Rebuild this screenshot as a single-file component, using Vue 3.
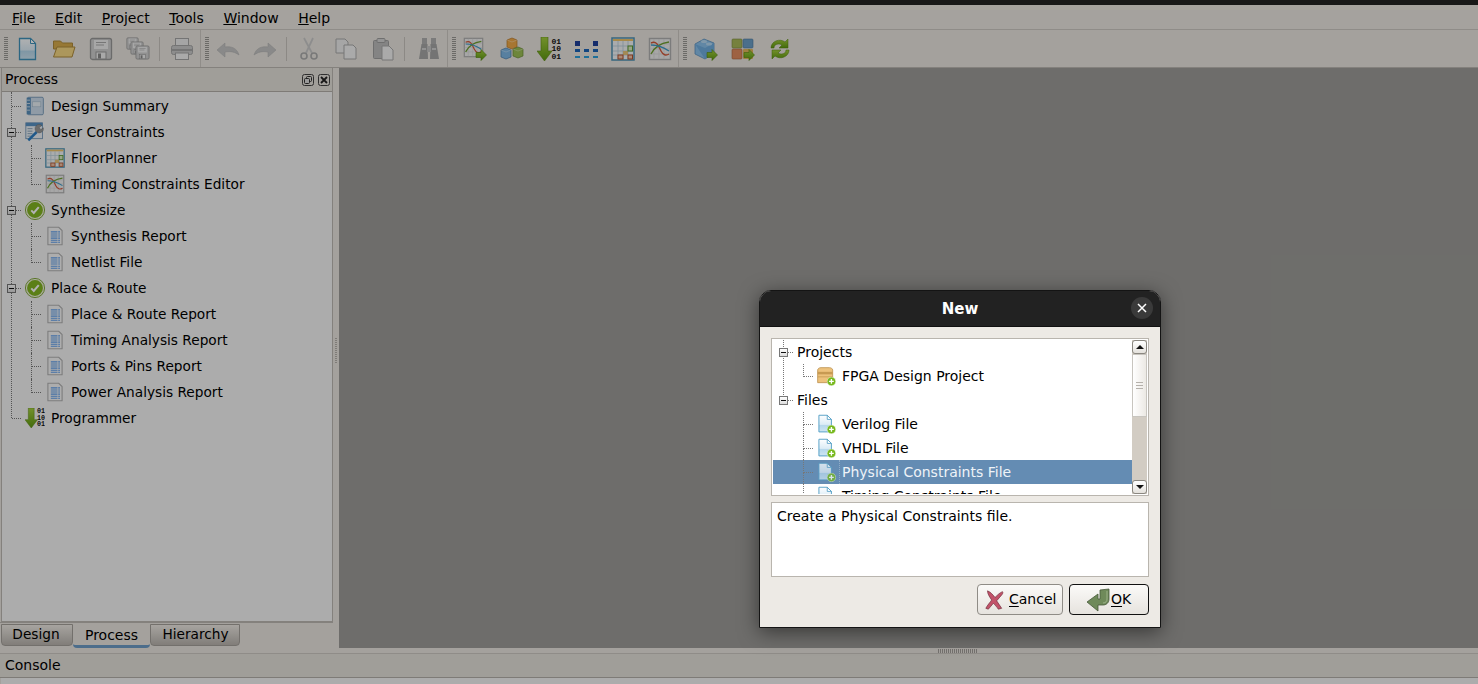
<template>
  <svg class="defs" width="0" height="0">
    <defs>
      <linearGradient id="gDoc" x1="0" y1="0" x2="0" y2="1">
        <stop offset="0" stop-color="#fdfeff" />
        <stop offset="0.55" stop-color="#dcecf6" />
        <stop offset="0.6" stop-color="#b6d8ec" />
        <stop offset="1" stop-color="#cfe6f3" />
      </linearGradient>
      <linearGradient id="gGreen" x1="0" y1="0" x2="0" y2="1">
        <stop offset="0" stop-color="#a6d040" />
        <stop offset="1" stop-color="#5f9a10" />
      </linearGradient>
      <symbol id="s-new" viewBox="0 0 24 24">
        <path d="M4.500 1.500h11l5 5v16h-16z" fill="url(#gDoc)" stroke="#3f93bb" stroke-width="1.300" />
        <path d="M15.500 1.500v5h5z" fill="#fff" stroke="#3f93bb" />
      </symbol>
      <symbol id="s-open" viewBox="0 0 24 24">
        <path d="M1.500 4h7l2 2h10v6h-19z" fill="#d8ad4c" stroke="#b08c3c" />
        <path d="M5 10h18l-3 10H1.500z" fill="#f6d884" stroke="#b08c3c" />
      </symbol>
      <symbol id="s-save" viewBox="0 0 24 24">
        <rect x="1.500" y="1.500" width="21" height="21" rx="2" fill="#d0d0d0" stroke="#9a9a9a" stroke-width="1.300" />
        <rect x="5" y="3" width="14" height="9" fill="#f0f0f0" />
        <path d="M7 5.500h10M7 8h8" stroke="#aaa" />
        <rect x="7" y="15" width="10" height="7" fill="#f2f2f2" stroke="#9a9a9a" />
        <rect x="9" y="16.500" width="3" height="5" fill="#8a8a8a" />
      </symbol>
      <symbol id="s-saveall" viewBox="0 0 24 24">
        <use href="#s-save" x="0" y="0" width="13" height="13" />
        <use href="#s-save" x="4" y="4" width="14" height="14" />
        <use href="#s-save" x="9" y="8" width="15" height="15" />
      </symbol>
      <symbol id="s-print" viewBox="0 0 24 24">
        <rect x="5.500" y="1.500" width="13" height="8" fill="#ececec" stroke="#a6a6a6" />
        <rect x="1.500" y="8.500" width="21" height="9" rx="2" fill="#cbcbcb" stroke="#a6a6a6" />
        <rect x="2" y="12" width="20" height="2" fill="#a8a8a8" />
        <rect x="5.500" y="16" width="13" height="6.500" fill="#f4f4f4" stroke="#a6a6a6" />
      </symbol>
      <symbol id="s-undo" viewBox="0 0 24 24">
        <path d="M1 13l8-7v4c6-1 12 1 14 8-4-3-8-4-14-3v5z" fill="#c4c4c4" stroke="#b5b5b5" stroke-width=".6" />
      </symbol>
      <symbol id="s-redo" viewBox="0 0 24 24">
        <path d="M23 13l-8-7v4C9 9 3 11 1 18c4-3 8-4 14-3v5z" fill="#c4c4c4" stroke="#b5b5b5" stroke-width=".6" />
      </symbol>
      <symbol id="s-cut" viewBox="0 0 24 24">
        <path d="M7 1l8 15M16 1L9 16" stroke="#cbcbcb" stroke-width="1.800" fill="none" />
        <circle cx="7" cy="19" r="3" fill="none" stroke="#adadad" stroke-width="1.600" />
        <circle cx="17" cy="19" r="3" fill="none" stroke="#adadad" stroke-width="1.600" />
      </symbol>
      <symbol id="s-copy" viewBox="0 0 24 24">
        <path d="M2 2h9l3 3v11H2z" fill="#eee" stroke="#aaa" />
        <path d="M10 8h9l3 3v11H10z" fill="#f4f4f4" stroke="#aaa" />
      </symbol>
      <symbol id="s-paste" viewBox="0 0 24 24">
        <rect x="2.500" y="3.500" width="15" height="18" rx="1" fill="#bdbdbd" stroke="#a0a0a0" />
        <rect x="6" y="1.500" width="8" height="4" rx="1" fill="#d4d4d4" stroke="#a0a0a0" />
        <path d="M11 9h7l4 4v10H11z" fill="#f4f4f4" stroke="#aaa" />
      </symbol>
      <symbol id="s-binoc" viewBox="0 0 24 24">
        <rect x="5" y="1" width="5" height="6" fill="#b0b0b0" />
        <rect x="14" y="1" width="5" height="6" fill="#b0b0b0" />
        <path d="M4.500 7h6l.5 15H2z" fill="#a6a6a6" />
        <path d="M13.500 7h6l2.500 15h-9z" fill="#a6a6a6" />
        <rect x="10" y="9" width="4" height="6" fill="#c6c6c6" />
        <path d="M5 12h4M15 12h4" stroke="#d2d2d2" stroke-width="2" />
      </symbol>
      <symbol id="s-graph" viewBox="0 0 24 24">
        <rect x="1.500" y="1.500" width="21" height="21" fill="#efefef" stroke="#b2b2b2" stroke-width="1.400" />
        <path d="M6 2v20M11 2v20M16 2v20M2 7h20M2 12h20M2 17h20" stroke="#d8d8d8" stroke-width=".7" />
        <path d="M3 6c6-3 8 4 10 8s5 5 8 3" fill="none" stroke="#d4583a" stroke-width="1.400" />
        <path d="M3 17c4-8 10-11 18-12" fill="none" stroke="#6fa030" stroke-width="1.400" />
        <path d="M3 8c6 0 12 2 18 6" fill="none" stroke="#3f9bc8" stroke-width="1.300" />
      </symbol>
      <symbol id="s-arrow" viewBox="0 0 12 12">
        <path d="M1 3.500h5V.5l5.500 5.500L6 11.500v-3H1z" fill="url(#gGreen)" stroke="#55860e" stroke-width=".6" />
      </symbol>
      <symbol id="s-grapharrow" viewBox="0 0 24 24">
        <use href="#s-graph" x="0" y="0" width="21" height="21" />
        <use href="#s-arrow" x="12" y="12" width="12" height="12" />
      </symbol>
      <symbol id="s-cubes" viewBox="0 0 24 24">
        <path d="M12 1l5 2v7l-5 2-5-2V3z" fill="#f0a947" stroke="#b9792a" stroke-width=".7" />
        <path d="M6 11l5 2v7l-5 2-5-2v-7z" fill="#7fb8e6" stroke="#4b7fae" stroke-width=".7" />
        <path d="M18 10l5 2v7l-5 2-5-2v-7z" fill="#9cc055" stroke="#6c8c35" stroke-width=".7" />
        <path d="M7 3l5 2 5-2M1 13l5 2 5-2M13 12l5 2 5-2" fill="none" stroke="#fff" stroke-opacity=".45" stroke-width=".7" />
      </symbol>
      <symbol id="s-prog" viewBox="0 0 24 24">
        <path d="M4 0h7v14h4l-7.500 10L0 14h4z" fill="url(#gGreen)" stroke="#5e8b18" stroke-width=".6" />
        <text x="14.500" y="6.500" class="bits">01</text>
        <text x="14.500" y="14.300" class="bits">10</text>
        <text x="14.500" y="22" class="bits">01</text>
      </symbol>
      <symbol id="s-dots" viewBox="0 0 24 24">
        <rect x="1" y="4" width="5" height="5" fill="#1f3f9a" />
        <rect x="19" y="4" width="5" height="5" fill="#1f3f9a" />
        <path d="M1 12h5v3H1zM10 12h5v3h-5zM19 12h5v3h-5z" fill="#1b64b8" />
        <path d="M1 19h5v2H1zM10 19h5v2h-5zM19 19h5v2h-5z" fill="#2aa0dc" />
      </symbol>
      <symbol id="s-floor" viewBox="0 0 24 24">
        <rect x="1" y="1" width="22" height="22" fill="#f4f6f8" stroke="#4f93b4" stroke-width="1.500" />
        <rect x="2" y="2" width="20" height="2" fill="#f0c56a" />
        <path d="M7 4v18M12 4v18M17 4v18M2 9h20M2 14h20M2 18h20" stroke="#b6cdd8" stroke-width=".8" />
        <rect x="12" y="14" width="5" height="4" fill="#e8c47c" />
        <rect x="17" y="9" width="4.500" height="5" fill="#dcecc2" stroke="#5d9a32" />
        <rect x="7" y="18" width="5" height="4" fill="#f3c5a8" stroke="#b5532e" />
        <rect x="17" y="18" width="4.500" height="4" fill="#f3c5a8" stroke="#b5532e" />
      </symbol>
      <symbol id="s-brick" viewBox="0 0 24 24">
        <path d="M10 2l10 4v10l-9 6-10-5V7z" fill="#8cc2ec" stroke="#5a90c0" stroke-width=".8" />
        <path d="M1 7l10 4 9-5v10l-9 6z" fill="#70aee0" />
        <ellipse cx="10" cy="4.500" rx="3" ry="1.500" fill="#b8daf4" />
        <ellipse cx="15" cy="7" rx="3" ry="1.500" fill="#b8daf4" />
        <use href="#s-arrow" x="12" y="12" width="12" height="12" />
      </symbol>
      <symbol id="s-mods" viewBox="0 0 24 24">
        <rect x="1" y="2" width="10" height="9" rx="1" fill="#a9b95a" stroke="#7c8a3c" stroke-width=".6" />
        <rect x="12" y="2" width="10" height="9" rx="1" fill="#6c9fc8" stroke="#4f7a9e" stroke-width=".6" />
        <rect x="1" y="12" width="10" height="10" rx="1" fill="#e38d60" stroke="#a9623c" stroke-width=".6" />
        <rect x="12" y="12" width="10" height="10" rx="1" fill="#e2b85e" />
        <use href="#s-arrow" x="12" y="12" width="12" height="12" />
      </symbol>
      <symbol id="s-refresh" viewBox="0 0 24 24">
        <path d="M3 11C3 4 12 1 17 5l3-3v9h-9l3-3c-3-2-8-1-8 3z" fill="url(#gGreen)" stroke="#55860e" stroke-width=".5" />
        <path d="M21 13c0 7-9 10-14 6l-3 3v-9h9l-3 3c3 2 8 1 8-3z" fill="url(#gGreen)" stroke="#55860e" stroke-width=".5" />
      </symbol>
      <symbol id="s-book" viewBox="0 0 24 24">
        <rect x="3" y="1.500" width="19" height="21" rx="1.500" fill="#cfdfee" stroke="#6d93b5" />
        <rect x="2" y="2" width="5" height="20" fill="#5a90bc" />
        <rect x="9" y="7" width="10" height="6" fill="#eaf1f7" stroke="#9bb5c9" stroke-width=".6" />
        <path d="M2 5h4M2 9h4M2 13h4M2 17h4" stroke="#dde8f2" />
      </symbol>
      <symbol id="s-constr" viewBox="0 0 24 24">
        <rect x="1" y="1" width="20" height="19" fill="#eef3f8" stroke="#6d93b5" />
        <rect x="1" y="1" width="20" height="4" fill="#5a92c4" />
        <path d="M3 8h6M3 11h6M3 14h6M3 17h6" stroke="#8aa6bd" stroke-width="1.200" />
        <path d="M4 22l10-10" stroke="#2d7fc5" stroke-width="3" />
        <path d="M14 12a5 5 0 0 1 6-8l-3 3 2 2 3-2a5 5 0 0 1-8 5z" fill="#9a9a9a" stroke="#666" stroke-width=".5" />
      </symbol>
      <symbol id="s-check" viewBox="0 0 24 24">
        <circle cx="12" cy="12" r="11.500" fill="#f2f6df" stroke="#6d9a1c" />
        <circle cx="12" cy="12" r="9.500" fill="#83b622" />
        <path d="M7.500 12.500l3 3 6-7" fill="none" stroke="#fff" stroke-width="2.400" />
      </symbol>
      <symbol id="s-report" viewBox="0 0 24 24">
        <path d="M3.500 1.500h13l4 4v17h-17z" fill="#f8f8f8" stroke="#b2b2b2" stroke-width="1.300" />
        <path d="M7 7h11M7 9.500h11M7 12h11M7 14.500h11M7 17h11M7 19.500h11" stroke="#5f9fee" stroke-width="1.300" stroke-dasharray="8 .8 3" />
      </symbol>
      <symbol id="s-plus" viewBox="0 0 10 10">
        <circle cx="5" cy="5" r="4.700" fill="#76b81c" stroke="#fff" stroke-width=".5" />
        <path d="M5 2.400v5.200M2.400 5h5.200" stroke="#fff" stroke-width="1.500" />
      </symbol>
      <symbol id="s-box" viewBox="0 0 24 24">
        <path d="M2 5c0-2 2-3 4-3h10c2 0 4 1 4 3v15H2z" fill="#edc27c" stroke="#bd9350" />
        <path d="M2 7h18v3H2z" fill="#c79a52" />
        <path d="M2 13h18" stroke="#c79a52" />
        <use href="#s-plus" x="13" y="13" width="11" height="11" />
      </symbol>
      <symbol id="s-docplus" viewBox="0 0 24 24">
        <path d="M3.500 1.500h10l5 5v15h-15z" fill="url(#gDoc)" stroke="#4f9cc4" stroke-width="1.100" />
        <path d="M13.500 1.500v5h5z" fill="#fff" stroke="#4f9cc4" />
        <use href="#s-plus" x="13" y="13" width="11" height="11" />
      </symbol>
      <symbol id="s-x" viewBox="0 0 24 24">
        <path d="M3 1c3 1 7 5 9 8 3-3 6-6 9-7 1 1 0 3-1 4-2 2-4 5-6 7 2 3 4 6 6 9l-4 1c-2-3-4-5-6-7-2 2-4 5-6 7l-3-1c2-4 5-7 7-10C6 9 3 5 3 1z" fill="#c2536a" stroke="#6e2a3a" stroke-width=".8" />
      </symbol>
      <symbol id="s-ok" viewBox="0 0 24 24">
        <path d="M23 1v10c0 4-3 6-6 6h-5v6L1 14l11-8v5h2V2z" fill="#6f8a5a" stroke="#46583a" stroke-width=".8" />
        <path d="M21 3v8c0 2-1 4-4 4" fill="none" stroke="#a8bd94" stroke-width=".8" />
      </symbol>
    </defs>
  </svg>

  <div class="app">
    <div class="topstrip"></div>
    <div class="menubar">
      <span v-for="m in menus" :key="m" class="menu"><u>{{ m[0] }}</u>{{ m.slice(1) }}</span>
    </div>
    <div class="toolbar">
      <div v-for="(group, g) in toolbar" :key="g" class="tgroup">
        <div class="handle"></div>
        <template v-for="(item, i) in group" :key="i">
          <div v-if="item === '|'" class="tsep"><i></i></div>
          <div v-else class="tbtn" :class="{ nudge: item === 'binoc' }">
            <svg :width="24" :height="24"><use :href="'#s-' + item" /></svg>
          </div>
        </template>
      </div>
    </div>

    <div class="main">
      <div class="side">
        <div class="panel">
          <div class="panel-head">
            <span>Process</span>
            <span class="head-btns">
              <svg width="12" height="12" viewBox="0 0 12 12"><rect x=".5" y=".5" width="11" height="11" rx="2" fill="none" stroke="#444" /><rect x="4.500" y="2.500" width="5" height="5" rx="1" fill="none" stroke="#333" /><rect x="2.500" y="4.500" width="5" height="5" rx="1" fill="#ddd" stroke="#333" /></svg>
              <svg width="12" height="12" viewBox="0 0 12 12"><rect x=".5" y=".5" width="11" height="11" rx="2" fill="none" stroke="#444" /><path d="M3 3l6 6M9 3l-6 6" stroke="#222" stroke-width="1.800" /></svg>
            </span>
          </div>
          <div class="tree process-tree">
            <div class="rootline"></div>
            <div v-for="row in processRows" :key="row.text" class="row" :class="rowClass(row)">
              <span v-if="row.lvl === 1" class="elbow"></span>
              <span v-else class="stub"></span>
              <span v-if="row.open" class="expander"></span>
              <svg class="ticon" width="20" height="20"><use :href="'#s-' + row.icon" /></svg>
              <span class="label">{{ row.text }}</span>
            </div>
          </div>
        </div>
        <div class="tabs">
          <div class="tab tab-design">Design</div>
          <div class="tab active">Process</div>
          <div class="tab tab-hier">Hierarchy</div>
        </div>
      </div>
      <div class="vsplit"><i></i></div>
      <div class="workspace"></div>
    </div>

    <div class="hsplit"><i></i></div>
    <div class="console-head">Console</div>
    <div class="console-body"></div>

    <div class="scrim"></div>

    <div class="dialog">
      <div class="dlg-head">
        <span class="dlg-title">New</span>
        <span class="dlg-close">
          <svg width="10" height="10" viewBox="0 0 10 10"><path d="M1 1l8 8M9 1L1 9" stroke="#fff" stroke-width="1.500" /></svg>
        </span>
      </div>
      <div class="dlg-body">
        <div class="listbox">
          <div class="tree new-tree">
            <div class="rootline"></div>
            <div v-for="row in newRows" :key="row.text" class="row" :class="rowClass(row)">
              <span v-if="row.lvl === 1" class="elbow"></span>
              <span v-else class="stub"></span>
              <span v-if="row.open" class="expander"></span>
              <svg v-if="row.icon" class="ticon" width="20" height="20"><use :href="'#s-' + row.icon" /></svg>
              <span class="label">{{ row.text }}</span>
            </div>
          </div>
          <div class="scrollbar">
            <div class="sb-btn"><b class="up"></b></div>
            <div class="sb-thumb"><i></i></div>
            <div class="sb-trough"></div>
            <div class="sb-btn"><b class="down"></b></div>
          </div>
        </div>
        <div class="descbox">Create a Physical Constraints file.</div>
        <div class="dlg-buttons">
          <div class="btn btn-cancel">
            <svg width="20" height="22"><use href="#s-x" /></svg>
            <span><u>C</u>ancel</span>
          </div>
          <div class="btn btn-ok">
            <svg width="24" height="24"><use href="#s-ok" /></svg>
            <span><u>O</u>K</span>
          </div>
        </div>
      </div>
    </div>
  </div>
</template>

<script setup>
const menus = ['File', 'Edit', 'Project', 'Tools', 'Window', 'Help']

const toolbar = [
  ['new', 'open', 'save', 'saveall', '|', 'print'],
  ['undo', 'redo', '|', 'cut', 'copy', 'paste', '|', 'binoc'],
  ['grapharrow', 'cubes', 'prog', 'dots', 'floor', 'graph'],
  ['brick', 'mods', 'refresh']
]

const processRows = [
  { text: 'Design Summary', lvl: 0, icon: 'book' },
  { text: 'User Constraints', lvl: 0, icon: 'constr', open: true },
  { text: 'FloorPlanner', lvl: 1, icon: 'floor' },
  { text: 'Timing Constraints Editor', lvl: 1, icon: 'graph', last: true },
  { text: 'Synthesize', lvl: 0, icon: 'check', open: true },
  { text: 'Synthesis Report', lvl: 1, icon: 'report' },
  { text: 'Netlist File', lvl: 1, icon: 'report', last: true },
  { text: 'Place & Route', lvl: 0, icon: 'check', open: true },
  { text: 'Place & Route Report', lvl: 1, icon: 'report' },
  { text: 'Timing Analysis Report', lvl: 1, icon: 'report' },
  { text: 'Ports & Pins Report', lvl: 1, icon: 'report' },
  { text: 'Power Analysis Report', lvl: 1, icon: 'report', last: true },
  { text: 'Programmer', lvl: 0, icon: 'prog' }
]

const newRows = [
  { text: 'Projects', lvl: 0, open: true },
  { text: 'FPGA Design Project', lvl: 1, icon: 'box', last: true },
  { text: 'Files', lvl: 0, open: true },
  { text: 'Verilog File', lvl: 1, icon: 'docplus' },
  { text: 'VHDL File', lvl: 1, icon: 'docplus' },
  { text: 'Physical Constraints File', lvl: 1, icon: 'docplus', selected: true },
  { text: 'Timing Constraints File', lvl: 1, icon: 'docplus' }
]

const rowClass = (row) => ({
  child: row.lvl === 1,
  last: row.last,
  selected: row.selected,
  noicon: !row.icon
})
</script>

<style scoped>
.defs {
  position: absolute;
}

.bits {
  font: bold 8px "Liberation Mono", monospace;
  fill: #111;
}

.app {
  position: relative;
  width: 1478px;
  height: 684px;
  display: flex;
  flex-direction: column;
  overflow: hidden;
  background: #ebe7e1;
  color: #000;
  font-family: "DejaVu Sans", sans-serif;
  font-size: 14px;
}

.topstrip {
  height: 5px;
  background: #181818;
  flex: none;
}

.menubar {
  height: 23px;
  flex: none;
  display: flex;
  align-items: center;
  gap: 19.6px;
  padding: 1px 0 0 12px;
  border-bottom: 1px solid #cdc9c3;
  background: #ece8e2;
}

.toolbar {
  height: 37px;
  flex: none;
  display: flex;
  background: #ebe7e1;
  border-bottom: 1px solid #bdb9b3;
}

.tgroup {
  display: flex;
  align-items: center;
  padding-left: 4px;
  border-right: 1px solid #cfcbc5;
}

.tgroup:last-child {
  border-right: none;
}

.handle {
  width: 4px;
  height: 23px;
  background: repeating-linear-gradient(#9a9894 0 1px, transparent 1px 2px);
}

.tbtn {
  width: 37px;
  display: flex;
  justify-content: center;
}

.tbtn.nudge {
  margin-left: 2px;
}

.tsep {
  width: 7px;
  display: flex;
  justify-content: center;
}

.tsep i {
  width: 1px;
  height: 24px;
  background: #c9c5bf;
}

.main {
  flex: none;
  height: 580px;
  display: flex;
}

.side {
  width: 333px;
  flex: none;
  display: flex;
  flex-direction: column;
}

.panel {
  height: 554px;
  margin-left: 1px;
  border: solid #bdb9b3;
  border-width: 0 1px 1px;
  background: #f7f7f7;
  box-sizing: border-box;
  display: flex;
  flex-direction: column;
}

.panel-head {
  height: 23px;
  flex: none;
  display: flex;
  align-items: center;
  justify-content: space-between;
  padding: 0 2px 0 3px;
  box-sizing: content-box;
  background: #e6e2dc;
  border-bottom: 1px solid #b5b1ab;
}

.panel-head > span:first-child {
  margin-top: -2px;
}

.head-btns {
  display: flex;
  gap: 4px;
}

.tree {
  position: relative;
}

.process-tree {
  --rowh: 26px;
  padding-top: 1px;
  margin-left: -2px;
  font-size: 13.7px;
}

.process-tree .row {
  padding-left: 25px;
}

.process-tree .row.child {
  padding-left: 45px;
}

.new-tree {
  --rowh: 24px;
  flex: 1;
  overflow: hidden;
  height: 154px;
}

.rootline {
  position: absolute;
  left: 11px;
  top: 0;
  width: 0;
  border-left: 1px dotted #777;
}

.process-tree .rootline {
  height: 326px;
}

.new-tree .rootline {
  height: 61px;
}

.row {
  position: relative;
  height: var(--rowh);
  display: flex;
  align-items: center;
  padding-left: 24px;
  white-space: nowrap;
  box-sizing: border-box;
}

.row.child {
  padding-left: 44px;
}

.row.noicon .label {
  margin-left: 1px;
}

.ticon {
  flex: none;
  margin-right: 6px;
}

.stub {
  position: absolute;
  left: 12px;
  top: 50%;
  width: 9px;
  border-top: 1px dotted #777;
}

.elbow {
  position: absolute;
  left: 31px;
  top: 0;
  width: 9px;
  height: 50%;
  border-left: 1px dotted #777;
  border-bottom: 1px dotted #777;
}

.elbow::before {
  content: "";
  position: absolute;
  left: -1px;
  top: 100%;
  height: calc(var(--rowh) / 2);
  border-left: 1px dotted #777;
}

.last .elbow::before {
  display: none;
}

.expander {
  position: absolute;
  left: 7px;
  top: calc(50% - 4px);
  width: 9px;
  height: 9px;
  box-sizing: border-box;
  border: 1px solid #777;
  background: linear-gradient(#fff, #ddd);
}

.expander::after {
  content: "";
  position: absolute;
  left: 1px;
  right: 1px;
  top: 3px;
  height: 1px;
  background: #111;
}

.tabs {
  height: 26px;
  flex: none;
  display: flex;
  padding: 1px 0 0 1px;
  border-top: 1px solid #bdb9b3;
  box-sizing: border-box;
  background: #ebe7e1;
}

.tab {
  height: 22px;
  line-height: 19px;
  text-align: center;
  font-size: 13.7px;
  box-sizing: border-box;
  border: 1px solid #a5a19b;
  border-radius: 0 0 4px 4px;
  background: linear-gradient(#efebe5, #b9b4ae);
}

.tab-design {
  width: 72px;
  text-indent: -2px;
}

.tab-hier {
  width: 90px;
  text-indent: 1px;
}

.tab.active {
  width: 77px;
  height: 24px;
  line-height: 22px;
  font-size: 14px;
  background: #ebe7e1;
  border-width: 0 0 3px;
  border-color: #6e9dc8;
  border-radius: 0 0 4px 4px;
}

.vsplit {
  width: 6px;
  flex: none;
  display: flex;
  align-items: center;
  justify-content: center;
  background: #ebe7e1;
}

.vsplit i {
  width: 2px;
  height: 26px;
  margin-top: -14px;
  background: repeating-linear-gradient(#b5b1ab 0 1px, transparent 1px 2px);
}

.workspace {
  flex: 1;
  background: #9e9d9a;
}

.hsplit {
  height: 5px;
  flex: none;
  display: flex;
  justify-content: center;
  align-items: center;
  padding-left: 438px;
  background: #ebe7e1;
  border-bottom: 1px solid #cdc9c3;
}

.hsplit i {
  width: 40px;
  height: 4px;
  background: repeating-linear-gradient(90deg, #a5a19c 0 1px, transparent 1px 2px);
}

.console-head {
  height: 24px;
  flex: none;
  display: flex;
  align-items: center;
  padding: 0 0 1px 5px;
  background: #e6e2dc;
  border-bottom: 1px solid #b5b1ab;
  box-sizing: border-box;
}

.console-body {
  flex: 1;
  background: #f7f7f7;
  margin-left: 1px;
}

.scrim {
  position: absolute;
  inset: 5px 0 0;
  background: rgba(0, 0, 0, 0.3);
}

.dialog {
  position: absolute;
  left: 759px;
  top: 290px;
  width: 402px;
  height: 338px;
  box-sizing: border-box;
  display: flex;
  flex-direction: column;
  border: 1px solid #141414;
  border-radius: 12px 12px 0 0;
  background: #edeae5;
  box-shadow: 0 4px 20px rgba(0, 0, 0, 0.5);
}

.dlg-head {
  height: 35px;
  flex: none;
  display: flex;
  align-items: center;
  justify-content: center;
  position: relative;
  border-radius: 11px 11px 0 0;
  background: #222;
  border-bottom: 1px solid #111;
}

.dlg-title {
  color: #fff;
  font-weight: bold;
  font-size: 15px;
}

.dlg-close {
  position: absolute;
  right: 7px;
  top: 6px;
  width: 22px;
  height: 22px;
  border-radius: 50%;
  background: #3a3a3a;
  display: flex;
  align-items: center;
  justify-content: center;
}

.dlg-body {
  flex: 1;
  padding: 11px;
  display: flex;
  flex-direction: column;
}

.listbox {
  height: 158px;
  flex: none;
  box-sizing: border-box;
  display: flex;
  border: 1px solid #b9b5ae;
  background: #fff;
  padding: 1px 1px 1px 0;
}

.selected {
  background: linear-gradient(#648cb3, #648cb3) 1px 0 no-repeat;
  color: #eef3f8;
}

.selected .ticon {
  opacity: 0.75;
}

.selected .label {
  position: relative;
}

.selected .label::before {
  content: "";
  position: absolute;
  left: -3px;
  top: -4px;
  bottom: -4px;
  border-left: 1px dotted #8fabc6;
}

.scrollbar {
  width: 15px;
  flex: none;
  display: flex;
  flex-direction: column;
  background: #d2ccc3;
}

.sb-btn {
  height: 14px;
  flex: none;
  box-sizing: border-box;
  border: 1px solid #8a8780;
  border-radius: 3px;
  background: linear-gradient(#fff, #e4e1dc);
  display: flex;
  align-items: center;
  justify-content: center;
}

.sb-btn b {
  width: 0;
  height: 0;
  border-left: 4px solid transparent;
  border-right: 4px solid transparent;
}

.sb-btn .up {
  border-bottom: 4px solid #111;
}

.sb-btn .down {
  border-top: 4px solid #111;
}

.sb-thumb {
  height: 63px;
  flex: none;
  box-sizing: border-box;
  border: 1px solid #c8c5bf;
  background: linear-gradient(90deg, #fff, #ece9e4);
  display: flex;
  align-items: center;
  justify-content: center;
}

.sb-thumb i {
  width: 7px;
  height: 7px;
  background: repeating-linear-gradient(#b5b1ab 0 1px, transparent 1px 3px);
}

.sb-trough {
  flex: 1;
}

.descbox {
  margin-top: 6px;
  height: 75px;
  flex: none;
  box-sizing: border-box;
  border: 1px solid #b9b5ae;
  background: #fff;
  padding: 5px 5px;
}

.dlg-buttons {
  margin-top: 7px;
  display: flex;
  justify-content: flex-end;
  gap: 6px;
}

.btn {
  height: 31px;
  box-sizing: border-box;
  border: 1px solid #8f8c86;
  border-radius: 4px;
  background: linear-gradient(#fbfaf8, #e6e3de);
  display: flex;
  align-items: center;
}

.btn span {
  margin-top: -1px;
}

.btn u {
  text-underline-offset: 2px;
}

.btn-cancel {
  width: 86px;
  padding-left: 7px;
  gap: 4px;
}

.btn-ok {
  width: 80px;
  padding-left: 16px;
  gap: 1px;
  border-color: #111;
}
</style>

<style>
body {
  margin: 0;
  overflow: hidden;
}
</style>
